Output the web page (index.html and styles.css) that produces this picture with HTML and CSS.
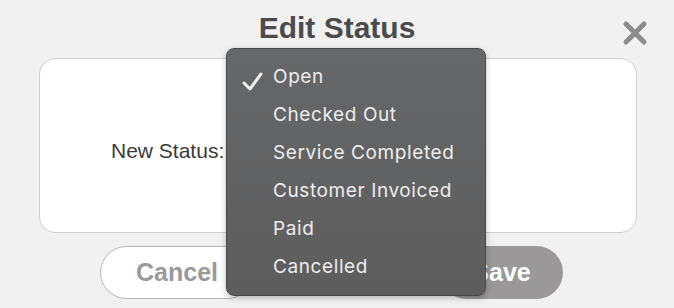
FILE: index.html
```html
<!DOCTYPE html>
<html>

<head>
    <title>Edit Status</title>
    <link rel="stylesheet" href="styles.css">
</head>

<body>
    <div class="modal">
        <div class="modal-header">
            <h1>Edit Status</h1>
            <button id="close-button" aria-label="Close">
                <svg width="26" height="26" viewBox="0 0 26 26">
                    <path d="M4 4 L22 22 M22 4 L4 22" stroke="#8c8c8c" stroke-width="5" stroke-linecap="round" />
                </svg>
            </button>
        </div>

        <div class="card">
            <label class="field-label">New Status:</label>
            <div class="select-slot"></div>
        </div>

        <div class="actions">
            <button id="cancel-button">Cancel</button>
            <button id="save-button">Save</button>
        </div>

        <!-- menu aberto do select -->
        <ul class="status-menu">
            <li class="selected">
                <svg class="check" width="22" height="20" viewBox="0 0 22 20">
                    <path d="M2 12 L8 18 L19 3" stroke="#f2f2f2" stroke-width="3" fill="none" stroke-linecap="round" stroke-linejoin="round" />
                </svg>Open
            </li>
            <li>Checked Out</li>
            <li>Service Completed</li>
            <li>Customer Invoiced</li>
            <li>Paid</li>
            <li>Cancelled</li>
        </ul>
    </div>
</body>

</html>
```

FILE: styles.css
```css
html,
body {
    margin: 0;
    padding: 0;
    background-color: #f1f1f1;
    font-family: "Liberation Sans", Arial, sans-serif;
}

.modal {
    position: relative;
    width: 674px;
    height: 308px;
    overflow: hidden;
}

.modal-header {
    display: flex;
    justify-content: center;
    align-items: center;
    height: 58px;
    position: relative;
}

.modal-header h1 {
    margin: 0;
    margin-top: -2px;
    font-size: 30px;
    font-weight: bold;
    color: #4b4b4b;
}

#close-button {
    position: absolute;
    top: 20px;
    right: 26px;
    padding: 0;
    background: none;
    border: none;
    cursor: pointer;
    display: flex;
}

.card {
    margin: 0 37px 0 39px;
    height: 173px;
    background-color: #ffffff;
    border: 1px solid #cfcfcf;
    border-radius: 16px;
    display: flex;
    align-items: center;
    padding-left: 71px;
}

.field-label {
    font-size: 21px;
    color: #3a3a3a;
    margin-top: 10px;
}

.select-slot {
    width: 260px;
}

.actions {
    display: flex;
    padding-top: 13px;
    padding-left: 100px;
    gap: 186px;
}

.actions button {
    height: 53px;
    border-radius: 27px;
    font-family: "Liberation Sans", Arial, sans-serif;
    font-size: 25px;
    font-weight: bold;
    cursor: pointer;
}

#cancel-button {
    width: 154px;
    background-color: #ffffff;
    border: 1px solid #b5b5b5;
    color: #9a9a9a;
}

#save-button {
    width: 123px;
    background-color: #9a9898;
    border: none;
    color: #ffffff;
}

.status-menu {
    position: absolute;
    top: 48px;
    left: 226px;
    width: 260px;
    height: 248px;
    margin: 0;
    padding: 9px 0 0 0;
    box-sizing: border-box;
    list-style: none;
    background: linear-gradient(to bottom, #666768, #5d5d5e);
    border: 1px solid #4a4a4a;
    border-radius: 8px;
    box-shadow: 0 2px 6px rgba(0, 0, 0, 0.25);
}

.status-menu li {
    height: 38px;
    line-height: 38px;
    padding-left: 46px;
    position: relative;
    font-family: "Inter", "Liberation Sans", sans-serif;
    font-size: 19px;
    letter-spacing: 0.6px;
    color: #ededed;
}

.status-menu .check {
    position: absolute;
    left: 15px;
    top: 13px;
}
```
